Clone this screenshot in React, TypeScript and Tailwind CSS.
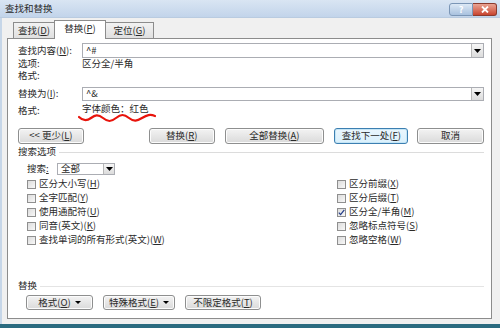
import React from 'react';

const font = { fontFamily: '"Noto Sans CJK SC", "Noto Sans", sans-serif' };

function K({ k }: { k: string }) {
  return (
    <>
      (<span className="underline underline-offset-1">{k}</span>)
    </>
  );
}

function DropBtn({ w = 'w-[12px]' }: { w?: string }) {
  return (
    <div className={`${w} h-full border-l border-[#b8b8b8] bg-gradient-to-b from-[#f6f6f6] to-[#dcdcdc] flex items-center justify-center`}>
      <svg width="7" height="4" viewBox="0 0 7 4">
        <path d="M0 0h7L3.5 4z" fill="#000" />
      </svg>
    </div>
  );
}

function Btn({ children, w, focus }: { children: React.ReactNode; w: string; focus?: boolean }) {
  return (
    <div
      className={`${w} h-full rounded-[3px] border flex items-center justify-center text-[9.5px] text-[#2a2a2a] ${
        focus
          ? 'border-[#3c7fb1] bg-gradient-to-b from-[#eaf6fd] to-[#d9f0fc] shadow-[inset_0_0_0_1px_#c4e5f6]'
          : 'border-[#8e8f8f] bg-gradient-to-b from-[#f3f3f3] to-[#dadada] shadow-[inset_0_0_0_1px_#fcfcfc]'
      }`}
    >
      {children}
    </div>
  );
}

function Check({ label, checked }: { label: React.ReactNode; checked?: boolean }) {
  return (
    <div className="h-[14px] flex items-center gap-[3px]">
      <div className="w-[9px] h-[9px] border border-[#8f8f8f] bg-gradient-to-br from-[#dcdcdc] to-[#f8f8f8] flex items-center justify-center">
        {checked && (
          <svg width="7" height="7" viewBox="0 0 7 7">
            <path d="M0.8 3.6 2.6 5.6 6.3 0.8" stroke="#27408b" strokeWidth="1.3" fill="none" />
          </svg>
        )}
      </div>
      <span className="text-[9.5px] text-[#2a2a2a] leading-none">{label}</span>
    </div>
  );
}

export default function App() {
  return (
    <div className="w-[500px] h-[328px] overflow-hidden flex flex-col bg-[#f0f0f0]" style={font}>
      {/* title bar */}
      <div className="h-[18px] flex items-center pl-[5px] pr-[3px] bg-gradient-to-b from-[#d9e5f3] to-[#c2d4ea] border-b border-[#b9cbe0]">
        <span className="text-[9.5px] text-[#2a2a2a] leading-none">查找和替换</span>
        <div className="flex-1" />
        <div className="flex h-[13px] mt-[2px]">
          <div className="w-[24px] h-full rounded-l-[3px] border border-[#7b96b6] bg-gradient-to-b from-[#dce8f5] to-[#a9c2df] flex items-center justify-center text-[9px] text-white font-bold leading-none">?</div>
          <div className="w-[24px] h-full rounded-r-[3px] border border-l-0 border-[#8b3b2e] bg-gradient-to-b from-[#e9a393] to-[#c8432f] flex items-center justify-center">
            <svg width="8" height="7" viewBox="0 0 8 7">
              <path d="M1 0.5 7 6.5M7 0.5 1 6.5" stroke="#fff" strokeWidth="1.8" />
            </svg>
          </div>
        </div>
      </div>

      {/* body */}
      <div className="flex-1 flex flex-col pl-[5px] pr-[8px] border-l-[2px] border-[#c6d6e8]">
        {/* tabs */}
        <div className="h-[20px] flex items-end pl-[6px]">
          <div className="w-[42px] h-[16px] border border-b-0 border-[#8c8c8c] bg-gradient-to-b from-[#f2f2f2] to-[#e0e0e0] flex items-center justify-center text-[9.5px] leading-none text-[#2a2a2a] -mr-px">
            查找<K k="D" />
          </div>
          <div className="w-[52px] h-[19px] border border-b-0 border-[#8c8c8c] bg-white flex items-center justify-center text-[9.5px] leading-none text-[#2a2a2a] relative z-10 -mb-px pb-[2px]">
            替换<K k="P" />
          </div>
          <div className="w-[48px] h-[16px] border border-b-0 border-l-0 border-[#8c8c8c] bg-gradient-to-b from-[#f2f2f2] to-[#e0e0e0] flex items-center justify-center text-[9.5px] leading-none text-[#2a2a2a]">
            定位<K k="G" />
          </div>
        </div>

        {/* panel */}
        <div className="flex-1 bg-white border border-[#8c8c8c] flex flex-col pl-[10px] pr-[7px] pt-[4px] pb-[8px] text-[9.5px] text-[#2a2a2a] leading-none">
          <div className="h-[15px] flex items-center">
            <span className="w-[64px]">查找内容<K k="N" />:</span>
            <div className="flex-1 h-full border border-[#abadb3] flex items-center pl-[3px]">
              <span className="flex-1">^#</span>
              <DropBtn />
            </div>
          </div>
          <div className="h-[12px] flex items-center">
            <span className="w-[64px]">选项:</span>
            <span>区分全/半角</span>
          </div>
          <div className="h-[12px] flex items-center">
            <span className="w-[64px]">格式:</span>
          </div>

          <div className="h-[14px] mt-[5px] flex items-center">
            <span className="w-[64px]">替换为<K k="I" />:</span>
            <div className="flex-1 h-full border border-[#abadb3] flex items-center pl-[3px]">
              <span className="flex-1">^&amp;</span>
              <DropBtn />
            </div>
          </div>
          <div className="h-[12px] mt-[4px] flex items-center">
            <span className="w-[64px]">格式:</span>
            <span className="relative -mt-[4px]">
              字体颜色：红色
              <svg className="absolute left-[-4px] top-[9px]" width="78" height="10" viewBox="0 0 78 10">
                <path
                  d="M1 4 C5 8 9 8 13 5 S20 1 25 5 S33 9 38 5 S46 1 51 5 S59 8 64 5 S72 1 77 3"
                  stroke="#e8140c"
                  strokeWidth="2.2"
                  fill="none"
                  strokeLinecap="round"
                />
              </svg>
            </span>
          </div>

          {/* main buttons */}
          <div className="h-[16px] mt-[11px] flex">
            <Btn w="w-[66px]">&lt;&lt; 更少<K k="L" /></Btn>
            <div className="w-[65px]" />
            <Btn w="w-[66px]">替换<K k="R" /></Btn>
            <div className="w-[10px]" />
            <Btn w="w-[100px]">全部替换<K k="A" /></Btn>
            <div className="w-[10px]" />
            <Btn w="w-[74px]" focus>查找下一处<K k="F" /></Btn>
            <div className="w-[9px]" />
            <Btn w="w-[67px]">取消</Btn>
          </div>

          <div className="h-[12px] mt-[2px] flex items-center gap-[3px]">
            <span>搜索选项</span>
            <div className="flex-1 h-px bg-[#dcdcdc]" />
          </div>

          <div className="h-[12px] mt-[5px] flex items-center pl-[9px]">
            <span className="w-[30px]">搜索<span className="underline">:</span></span>
            <div className="w-[58px] h-full border border-[#abadb3] flex items-center pl-[3px]">
              <span className="flex-1">全部</span>
              <DropBtn w="w-[11px]" />
            </div>
          </div>

          <div className="mt-[2px] flex pl-[9px]">
            <div className="w-[310px] flex flex-col">
              <Check label={<>区分大小写<K k="H" /></>} />
              <Check label={<>全字匹配<K k="Y" /></>} />
              <Check label={<>使用通配符<K k="U" /></>} />
              <Check label={<>同音(英文)<K k="K" /></>} />
              <Check label={<>查找单词的所有形式(英文)<K k="W" /></>} />
            </div>
            <div className="flex flex-col">
              <Check label={<>区分前缀<K k="X" /></>} />
              <Check label={<>区分后缀<K k="T" /></>} />
              <Check checked label={<>区分全/半角<K k="M" /></>} />
              <Check label={<>忽略标点符号<K k="S" /></>} />
              <Check label={<>忽略空格<K k="W" /></>} />
            </div>
          </div>

          <div className="flex-1" />

          <div className="h-[12px] flex items-center gap-[3px]">
            <span>替换</span>
            <div className="flex-1 h-px bg-[#e4e4e4]" />
          </div>
          <div className="h-[15px] mt-[3px] flex pl-[8px] gap-[10px]">
            <Btn w="w-[67px]">
              格式<K k="O" />
              <svg className="ml-[4px]" width="6" height="3" viewBox="0 0 6 3"><path d="M0 0h6L3 3z" fill="#000" /></svg>
            </Btn>
            <Btn w="w-[72px]">
              特殊格式<K k="E" />
              <svg className="ml-[4px]" width="6" height="3" viewBox="0 0 6 3"><path d="M0 0h6L3 3z" fill="#000" /></svg>
            </Btn>
            <Btn w="w-[76px]">不限定格式<K k="T" /></Btn>
          </div>
        </div>
        <div className="h-[5px]" />
      </div>
      <div className="h-[4px] bg-[#2b6b80]" />
    </div>
  );
}
